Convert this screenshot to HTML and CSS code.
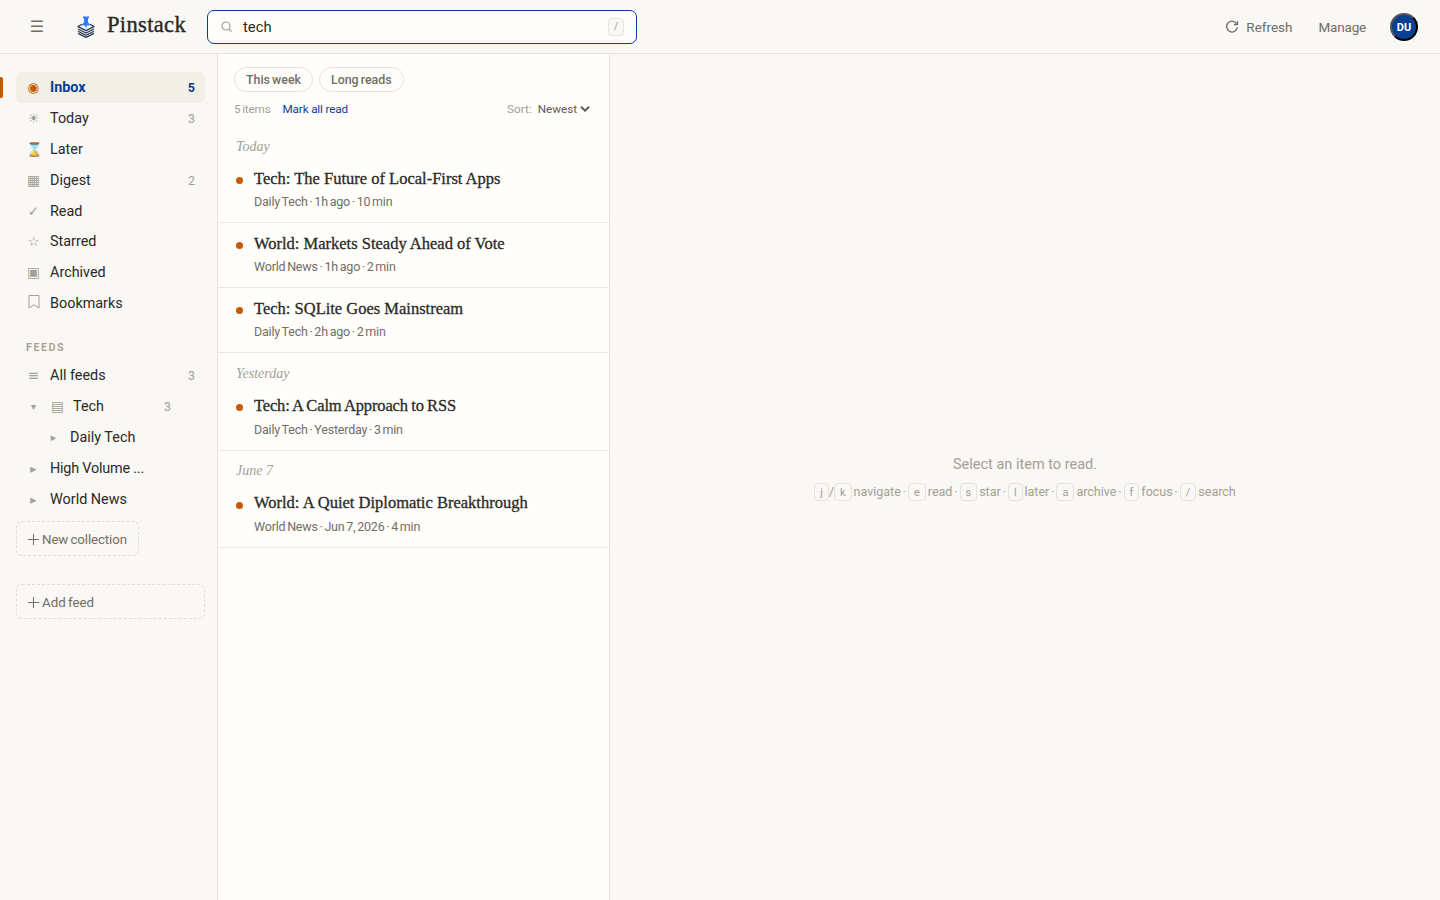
FILE: index.html
```html
<!DOCTYPE html>
<html lang="en">
<head>
  <meta charset="UTF-8">
  <meta name="viewport" content="width=device-width, initial-scale=1.0">
  <title>Pinstack</title>
  <link rel="stylesheet" href="styles.css">
</head>
<body>
  <header class="topbar">
    <button class="menu-btn" aria-label="Toggle sidebar">☰</button>
    <a class="brand">
      <svg class="brand-logo" viewBox="0 0 20 24" width="20" height="24">
        <g fill="none" stroke="#25364f" stroke-width="1.2" stroke-linejoin="round">
          <path d="M6 9.2 L2 11.6 L10 15.6 L18 11.6 L14 9.2"/>
          <path d="M2 14 L10 18 L18 14"/>
          <path d="M2 16.2 L10 20.2 L18 16.2"/>
          <path d="M2 18.4 L10 22.4 L18 18.4"/>
        </g>
        <path fill="#2f7df6" d="M7 1.4h6v1.9h-1v3.9l1.8 2v1.2h-2.9L10 14l-.9-3.6H6.2V9.2l1.8-2V3.3H7z"/>
      </svg>
      <span class="brand-name">Pinstack</span>
    </a>
    <div class="search">
      <svg class="search-icon" viewBox="0 0 12 12" width="12" height="12" fill="none" stroke="#a39f94" stroke-width="1.2">
        <circle cx="5" cy="5" r="4"/>
        <path d="M8 8 L10.6 10.6"/>
      </svg>
      <span class="search-text">tech</span>
      <kbd>/</kbd>
    </div>
    <nav class="actions">
      <a class="action">
        <svg viewBox="0 0 14 14" width="14" height="14" fill="none" stroke="#716e66" stroke-width="1.3">
          <path d="M11.9 4.2 A5.4 5.4 0 1 0 12.4 7.4"/>
          <path d="M12.4 1.2 V4.7 H8.9"/>
        </svg>
        <span>Refresh</span>
      </a>
      <a class="action manage"><span>Manage</span></a>
      <button class="avatar">DU</button>
    </nav>
  </header>

  <div class="layout">
    <aside class="sidebar">
      <ul class="nav">
        <li class="active"><i>◉</i><span>Inbox</span><b>5</b></li>
        <li><i>☀</i><span>Today</span><b>3</b></li>
        <li><i>⌛</i><span>Later</span></li>
        <li><i>▦</i><span>Digest</span><b>2</b></li>
        <li><i>✓</i><span>Read</span></li>
        <li><i>☆</i><span>Starred</span></li>
        <li><i>▣</i><span>Archived</span></li>
        <li>
          <i><svg class="bookmark" viewBox="0 0 12 14" width="12" height="14" fill="none" stroke="#a39f94"><path d="M1 .5 H11 V13 L6 9.8 L1 13 Z"/></svg></i>
          <span>Bookmarks</span>
        </li>
      </ul>

      <h2 class="nav-title">FEEDS</h2>
      <ul class="nav feeds">
        <li><i>≡</i><span>All feeds</span><b>3</b></li>
        <li class="folder"><i class="caret">▾</i><i>▤</i><span>Tech</span><b>3</b></li>
        <li class="child"><i class="caret">▸</i><span>Daily Tech</span></li>
        <li><i class="arrow">▸</i><span class="long">High Volume ...</span></li>
        <li><i class="arrow">▸</i><span>World News</span></li>
      </ul>
      <button class="dashed new-collection"><svg viewBox="0 0 11 11" width="11" height="11" stroke="#716e66"><path d="M0 5.5H11M5.5 0V11"/></svg>New collection</button>
      <button class="dashed add-feed"><svg viewBox="0 0 11 11" width="11" height="11" stroke="#716e66"><path d="M0 5.5H11M5.5 0V11"/></svg>Add feed</button>
    </aside>

    <section class="list">
      <div class="chips">
        <button class="chip">This week</button>
        <button class="chip">Long reads</button>
      </div>
      <div class="toolbar">
        <span class="count">5 items</span>
        <a class="mark">Mark all read</a>
        <span class="sort">Sort:</span>
        <span class="sort-value">Newest</span>
        <svg viewBox="0 0 10 6" width="10" height="6" fill="none" stroke="#5c5a53" stroke-width="2"><path d="M1 .8 L5 4.6 L9 .8"/></svg>
      </div>

      <h3 class="day">Today</h3>
      <article class="item">
        <h4>Tech: The Future of Local-First Apps</h4>
        <p>Daily Tech · 1h ago · 10 min</p>
      </article>
      <article class="item">
        <h4>World: Markets Steady Ahead of Vote</h4>
        <p>World News · 1h ago · 2 min</p>
      </article>
      <article class="item">
        <h4>Tech: SQLite Goes Mainstream</h4>
        <p>Daily Tech · 2h ago · 2 min</p>
      </article>
      <h3 class="day">Yesterday</h3>
      <article class="item">
        <h4 class="tight">Tech: A Calm Approach to RSS</h4>
        <p>Daily Tech · Yesterday · 3 min</p>
      </article>
      <h3 class="day">June 7</h3>
      <article class="item">
        <h4>World: A Quiet Diplomatic Breakthrough</h4>
        <p>World News · Jun 7, 2026 · 4 min</p>
      </article>
    </section>

    <main class="reader">
      <p class="empty">Select an item to read.</p>
      <p class="keys"><kbd>j</kbd>/<kbd>k</kbd> navigate · <kbd>e</kbd> read · <kbd>s</kbd> star · <kbd>l</kbd> later · <kbd>a</kbd> archive · <kbd>f</kbd> focus · <kbd>/</kbd> search</p>
    </main>
  </div>
</body>
</html>
```
FILE: styles.css
```css
* {
  box-sizing: border-box;
}

body {
  margin: 0;
  height: 100vh;
  display: flex;
  flex-direction: column;
  overflow: hidden;
  background: #f9f8f4;
  color: #2b2a27;
  font-family: Roboto, "DejaVu Sans", "Noto Color Emoji", sans-serif;
  font-size: 14px;
}

h2, h3, h4, p, ul {
  margin: 0;
  padding: 0;
  list-style: none;
}

button {
  font-family: inherit;
  background: none;
}

svg {
  flex: none;
}

kbd {
  font-family: inherit;
  display: inline-block;
  border: 1px solid #e6e3d9;
  border-radius: 4px;
  color: #a39f94;
  background: #f9f8f4;
  text-align: center;
}

/* top bar */
.topbar {
  height: 54px;
  flex: none;
  display: flex;
  align-items: center;
  border-bottom: 1px solid #e6e3d9;
  padding: 0 22px 0 27px;
}

.menu-btn {
  border: 0;
  padding: 0;
  width: 20px;
  font-size: 16px;
  color: #716e66;
}

.brand {
  display: flex;
  align-items: center;
  width: 131px;
  margin-left: 29px;
}

.brand-name {
  margin: -3px 0 0 11px;
  font-family: "Liberation Serif", serif;
  font-size: 22.5px;
  letter-spacing: 0.35px;
  -webkit-text-stroke: 0.4px #2b2a27;
}

.search {
  width: 430px;
  height: 34px;
  display: flex;
  align-items: center;
  padding: 0 12px 0 13px;
  border: 1px solid #0b3d91;
  border-radius: 7px;
  background: #fffefb;
}

.search-text {
  flex: 1;
  margin: 1px 0 0 10px;
  font-size: 14.8px;
}

.search kbd {
  width: 16px;
  height: 18px;
  font-size: 11px;
  line-height: 16px;
}

.actions {
  margin-left: auto;
  display: flex;
  align-items: center;
  color: #716e66;
  font-size: 13.5px;
}

.action {
  display: flex;
  align-items: center;
  gap: 7px;
}

.action span {
  padding-top: 1px;
}

.manage {
  margin: 0 24px 0 26px;
  letter-spacing: -0.2px;
}

.avatar {
  width: 28px;
  height: 28px;
  padding: 1px 0 0;
  border: 2px outset #000;
  border-radius: 50%;
  background: #0b3d91;
  color: #fff;
  font-size: 11px;
  font-weight: 700;
}

.layout {
  flex: 1;
  display: flex;
  min-height: 0;
}

/* sidebar */
.sidebar {
  width: 218px;
  flex: none;
  padding: 18px 12px 0 16px;
  border-right: 1px solid #e6e3d9;
}

.nav li {
  position: relative;
  display: flex;
  align-items: center;
  height: 30.9px;
  padding: 0 10px;
  border-radius: 6px;
}

.nav span {
  font-size: 14.4px;
}

.nav i {
  width: 15px;
  margin-right: 9px;
  text-align: center;
  font-style: normal;
  font-size: 13.5px;
  line-height: 15px;
  color: #a39f94;
}

.nav b {
  margin-left: auto;
  font-size: 12.5px;
  font-weight: 400;
  color: #a39f94;
}

.nav .active {
  background: #f2efe7;
}

.nav .active::before {
  content: "";
  position: absolute;
  left: -16px;
  top: 5px;
  width: 3px;
  height: 21px;
  border-radius: 0 2px 2px 0;
  background: #c65a00;
}

.nav .active i {
  color: #c65a00;
}

.nav .active span,
.nav .active b {
  color: #0b3d91;
  font-weight: 700;
}

.bookmark {
  display: block;
  margin: -3px 0 0 2px;
}

.nav-title {
  margin: 22px 0 6px 10px;
  font-size: 10.7px;
  line-height: 13px;
  font-weight: 600;
  letter-spacing: 1.5px;
  color: #a39f94;
}

.feeds li {
  height: 31px;
}

.nav .caret {
  font-size: 10px;
}

.nav .arrow {
  font-size: 12.5px;
}

.nav .folder {
  padding-right: 34px;
}

.nav .folder span {
  margin-left: -1px;
}

.nav .child {
  padding-left: 30px;
}

.nav .child .caret {
  font-size: 11px;
}

.nav .child span {
  margin-left: -4px;
}

.nav .child .caret {
  margin-right: 13px;
}

.nav .long {
  letter-spacing: -0.2px;
}

.dashed {
  display: flex;
  align-items: center;
  gap: 3px;
  height: 35px;
  padding: 2px 11px 0;
  border: 1px dashed #e0ddd2;
  border-radius: 6px;
  color: #716e66;
  font-size: 13.3px;
  word-spacing: -1px;
}

.new-collection {
  width: 123px;
  margin-top: 6px;
  white-space: nowrap;
  letter-spacing: -0.1px;
}

.add-feed {
  width: 100%;
  margin-top: 28px;
}

/* item list */
.list {
  width: 392px;
  flex: none;
  background: #fffefb;
  border-right: 1px solid #e6e3d9;
}

.chips {
  display: flex;
  gap: 6px;
  padding: 13px 16px 0;
}

.chip {
  height: 25px;
  padding: 0 11px;
  border: 1px solid #e6e3d9;
  border-radius: 13px;
  color: #716e66;
  font-size: 12.4px;
  font-weight: 500;
  word-spacing: -1px;
}

.toolbar {
  display: flex;
  align-items: center;
  height: 34px;
  padding: 0 19px 0 16px;
  font-size: 11.7px;
  color: #a39f94;
}

.count {
  letter-spacing: -0.15px;
  word-spacing: -1px;
}

.mark {
  margin-left: 12px;
  color: #0b3d91;
  letter-spacing: -0.15px;
}

.sort {
  margin-left: auto;
}

.sort-value {
  margin: 0 3px 0 6px;
  color: #5c5a53;
}

.day {
  height: 32.4px;
  padding: 12.6px 18px 0;
  font: italic 14px/16px "Liberation Serif", serif;
  color: #a39f94;
}

.item {
  position: relative;
  height: 65px;
  padding: 9.3px 18px 0 36px;
  border-bottom: 1px solid #ebe9df;
}

.item::before {
  content: "";
  position: absolute;
  left: 18px;
  top: 18.6px;
  width: 7px;
  height: 7px;
  border-radius: 50%;
  background: #c65a00;
}

.item h4 {
  font: 400 16.5px/22px "Liberation Serif", serif;
  white-space: nowrap;
  -webkit-text-stroke: 0.3px #2b2a27;
}

.item .tight {
  letter-spacing: -0.15px;
  word-spacing: -0.6px;
}

.item p {
  margin-top: 4.5px;
  font-size: 12.5px;
  line-height: 16px;
  letter-spacing: -0.2px;
  word-spacing: -1.1px;
  color: #716e66;
}

/* reader */
.reader {
  flex: 1;
  display: flex;
  flex-direction: column;
  align-items: center;
  padding-top: 401px;
  color: #a39f94;
}

.empty {
  font-size: 14.5px;
  line-height: 20px;
}

.keys {
  margin-top: 8px;
  font-size: 12.5px;
  line-height: 18px;
  white-space: nowrap;
  word-spacing: -1.16px;
}

.keys kbd {
  height: 18px;
  padding: 0 5px;
  font-size: 11px;
  line-height: 17px;
}
```
